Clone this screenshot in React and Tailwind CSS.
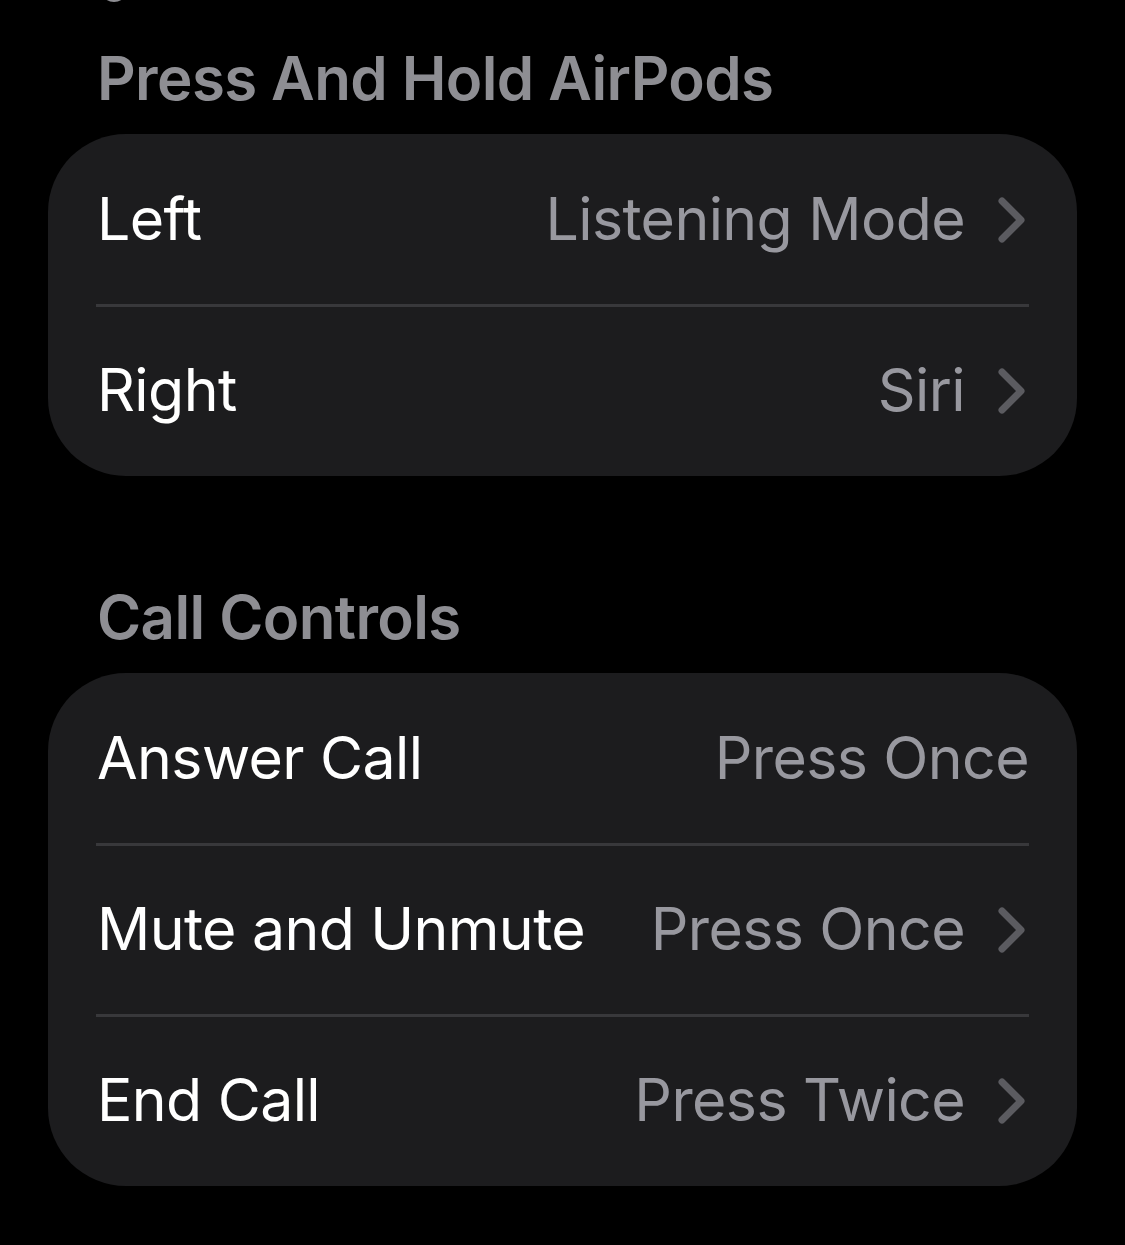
const sections = [
  {
    title: "Press And Hold AirPods",
    rows: [
      { label: "Left", value: "Listening Mode", chevron: true },
      { label: "Right", value: "Siri", chevron: true },
    ],
  },
  {
    title: "Call Controls",
    rows: [
      { label: "Answer Call", value: "Press Once", chevron: false },
      { label: "Mute and Unmute", value: "Press Once", chevron: true },
      { label: "End Call", value: "Press Twice", chevron: true },
    ],
  },
];

function Row({ row, last }) {
  return (
    <div className="relative flex h-[171px] items-center justify-between pl-[49px] pr-[48px]">
      <span className="text-[59px] tracking-[-0.6px] text-white">{row.label}</span>
      <div className="flex items-center">
        <span className="text-[59px] tracking-[-0.6px] text-[#98989f]">{row.value}</span>
        {row.chevron && (
          <svg width="30" height="48" viewBox="0 0 30 48" className="ml-[32px] mr-[2px]">
            <path
              d="M5 5 L24 24 L5 43"
              fill="none"
              stroke="#5b5b60"
              strokeWidth="7"
              strokeLinecap="round"
              strokeLinejoin="round"
            />
          </svg>
        )}
      </div>
      {!last && (
        <div className="absolute bottom-[-2px] left-[48px] right-[48px] h-[3px] bg-[#38383b]" />
      )}
    </div>
  );
}

export default function App() {
  return (
    <div
      className="relative h-[1245px] w-[1125px] overflow-hidden bg-black px-[48px]"
      style={{ fontFamily: "Inter, 'Noto Sans', sans-serif" }}
    >
      {/* bottom of clipped element above */}
      <div className="absolute left-[100px] top-[-26px] h-[28px] w-[28px] rounded-full border-b-[3px] border-[#8e8e93]" />
      {sections.map((s, i) => (
        <section key={s.title} className={i === 0 ? "pt-[40px]" : "pt-[103px]"}>
          <h2 className="pl-[49px] text-[60px] font-semibold leading-[76px] tracking-[-0.6px] text-[#8e8e93] mb-[18px]">
            {s.title}
          </h2>
          <div className="overflow-hidden rounded-[78px] bg-[#1c1c1e]">
            {s.rows.map((r, j) => (
              <Row key={r.label} row={r} last={j === s.rows.length - 1} />
            ))}
          </div>
        </section>
      ))}
    </div>
  );
}
